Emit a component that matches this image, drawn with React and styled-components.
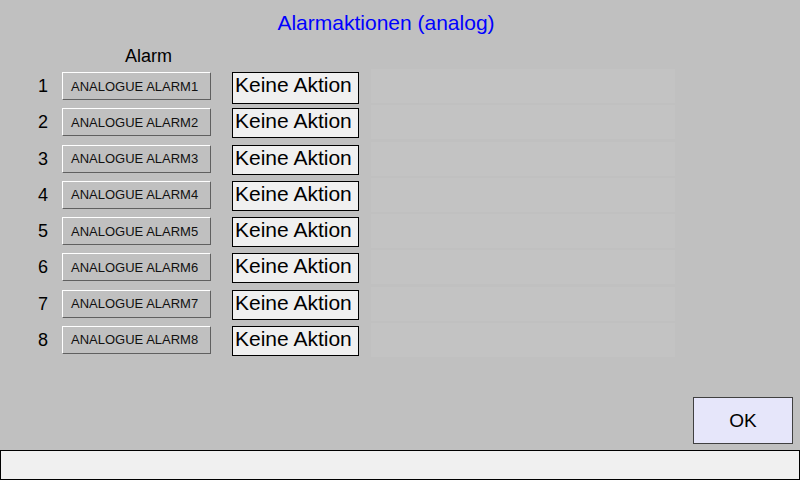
import React from "react";
import styled, { createGlobalStyle } from "styled-components";

const Global = createGlobalStyle`
  html, body { margin: 0; padding: 0; background: #c0c0c0; }
  body { font-family: "Liberation Sans", Arial, sans-serif; }
`;

const Screen = styled.div`
  width: 800px;
  height: 480px;
  background: #c0c0c0;
  display: flex;
  flex-direction: column;
  overflow: hidden;
  font-family: "Liberation Sans", Arial, sans-serif;
`;

const Title = styled.h1`
  margin: 0;
  padding: 11px 28px 0 0;
  font-size: 21px;
  line-height: 24px;
  font-weight: normal;
  color: #0000ff;
  text-align: center;
`;

const Header = styled.div`
  margin-top: 11px;
  padding-left: 125px;
  font-size: 18px;
  line-height: 21px;
  color: #000;
`;

const Rows = styled.div`
  margin-top: 5px;
  display: grid;
  grid-template-columns: 32px 149px 127px 304px;
  grid-auto-rows: 36.29px;
  padding-left: 30px;
`;

const Num = styled.div`
  font-size: 18px;
  line-height: 28px;
  text-align: center;
  color: #000;
  padding-right: 6px;
`;

const AlarmButton = styled.button`
  box-sizing: border-box;
  width: 149px;
  height: 28px;
  margin: 0;
  padding: 0 0 0 8px;
  text-align: left;
  background: #c0c0c0;
  border: 1px solid;
  border-color: #ffffff #606060 #606060 #ffffff;
  font-family: "Liberation Sans", Arial, sans-serif;
  font-size: 13px;
  color: #111;
  cursor: pointer;
`;

const ActionBox = styled.div`
  box-sizing: border-box;
  margin-left: 21px;
  width: 127px;
  height: ${(p) => (p.$tall ? 32 : 30)}px;
  background: #f0f0f0;
  border: 1px solid #000;
  padding-left: 2px;
  font-size: 21px;
  line-height: 24px;
  color: #000;
  white-space: nowrap;
`;

const Panel = styled.div`
  margin: -3px 0 0 33px;
  width: 304px;
  height: 34px;
  background: #c3c3c3;
`;

const Spacer = styled.div`
  flex: 1;
`;

const Footer = styled.div`
  display: flex;
  justify-content: flex-end;
  padding: 0 7px 6px 0;
`;

const OkButton = styled.button`
  box-sizing: border-box;
  width: 100px;
  height: 47px;
  margin: 0;
  background: #e6e6fa;
  border: 1px solid #404040;
  font-family: "Liberation Sans", Arial, sans-serif;
  font-size: 19px;
  color: #000;
  cursor: pointer;
`;

const StatusBar = styled.div`
  box-sizing: border-box;
  height: 30px;
  background: #f0f0f0;
  border: 1px solid #000;
`;

const rows = [1, 2, 3, 4, 5, 6, 7, 8];

export default function App() {
  return (
    <>
      <Global />
      <Screen>
        <Title>Alarmaktionen (analog)</Title>
        <Header>Alarm</Header>
        <Rows>
          {rows.map((n) => (
            <React.Fragment key={n}>
              <Num>{n}</Num>
              <AlarmButton>ANALOGUE ALARM{n}</AlarmButton>
              <ActionBox $tall={n === 1}>Keine Aktion</ActionBox>
              <Panel />
            </React.Fragment>
          ))}
        </Rows>
        <Spacer />
        <Footer>
          <OkButton>OK</OkButton>
        </Footer>
        <StatusBar />
      </Screen>
    </>
  );
}
